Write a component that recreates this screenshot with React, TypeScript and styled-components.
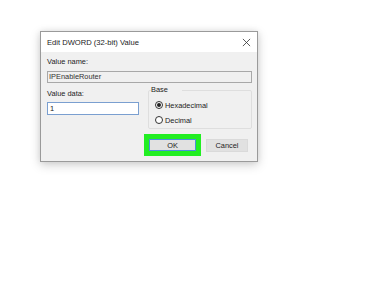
import React from "react";
import styled, { createGlobalStyle } from "styled-components";

const Global = createGlobalStyle`
  html, body { margin: 0; padding: 0; background: #ffffff; }
  body { font-family: "Liberation Sans", Arial, sans-serif; }
`;

const Page = styled.div`
  width: 375px;
  height: 300px;
  padding: 31px 0 0 40px;
  box-sizing: border-box;
`;

const Dialog = styled.div`
  width: 218px;
  height: 131px;
  box-sizing: border-box;
  border: 1px solid #9a9a9a;
  background: #f0f0f0;
  box-shadow: 0 3px 10px rgba(0, 0, 0, 0.18), 0 0 6px rgba(0, 0, 0, 0.08);
  display: flex;
  flex-direction: column;
`;

const TitleBar = styled.div`
  height: 20px;
  background: #ffffff;
  display: flex;
  align-items: center;
  justify-content: space-between;
  padding: 0 6px 0 6px;
  font-size: 7.6px;
  color: #1a1a1a;
`;

const Close = styled.svg`
  width: 9px;
  height: 9px;
`;

const Body = styled.div`
  flex: 1;
  padding: 5px 5px 0 6px;
  display: flex;
  flex-direction: column;
`;

const Label = styled.div`
  font-size: 7.4px;
  color: #222;
  line-height: 10px;
`;

const NameField = styled.div`
  margin-top: 4px;
  height: 12px;
  box-sizing: border-box;
  border: 1px solid #a8a8a8;
  background: #f0f0f0;
  font-size: 7.4px;
  color: #333;
  line-height: 10px;
  padding-left: 1px;
`;

const Row = styled.div`
  margin-top: 6px;
  display: grid;
  grid-template-columns: 92px 1fr;
  column-gap: 9px;
  align-items: start;
`;

const Col = styled.div`
  display: flex;
  flex-direction: column;
`;

const DataInput = styled.div`
  margin-top: 3px;
  width: 92px;
  height: 13px;
  box-sizing: border-box;
  border: 1px solid #7a9fd0;
  background: #ffffff;
  font-size: 7.4px;
  color: #222;
  line-height: 11px;
  padding-left: 2px;
`;

const Group = styled.fieldset`
  margin: -4px 0 0 0;
  height: 44px;
  box-sizing: border-box;
  border: 1px solid #dedede;
  border-radius: 2px;
  padding: 5px 0 0 6px;
  display: flex;
  flex-direction: column;
  gap: 5px;
`;

const Legend = styled.legend`
  font-size: 7.4px;
  color: #222;
  padding: 0 14px 0 0;
  margin-left: -4px;
  line-height: 10px;
`;

const RadioRow = styled.div`
  display: flex;
  align-items: center;
  gap: 2px;
  font-size: 7.4px;
  color: #222;
  height: 10px;
`;

const Radio = styled.span<{ $checked?: boolean }>`
  width: 8px;
  height: 8px;
  box-sizing: border-box;
  border: 1px solid #333;
  border-radius: 50%;
  background: #fff;
  display: inline-flex;
  align-items: center;
  justify-content: center;
  &::after {
    content: "";
    width: 4px;
    height: 4px;
    border-radius: 50%;
    background: ${(p) => (p.$checked ? "#222" : "transparent")};
  }
`;

const Buttons = styled.div`
  margin-top: 5px;
  display: flex;
  justify-content: flex-end;
  align-items: center;
  gap: 5px;
  padding-right: 4px;
`;

const Highlight = styled.div`
  width: 57px;
  height: 22px;
  box-sizing: border-box;
  border: 5px solid #22ee22;
  background: #d8d8d8;
  display: flex;
  align-items: center;
  justify-content: center;
`;

const Button = styled.div<{ $primary?: boolean }>`
  width: ${(p) => (p.$primary ? "100%" : "42px")};
  height: ${(p) => (p.$primary ? "100%" : "13px")};
  box-sizing: border-box;
  background: #e1e1e1;
  border: 1px solid ${(p) => (p.$primary ? "#4a90d9" : "#dadada")};
  font-size: 7.4px;
  color: #222;
  display: flex;
  align-items: center;
  justify-content: center;
`;

export default function App() {
  return (
    <>
      <Global />
      <Page>
        <Dialog>
          <TitleBar>
            <span>Edit DWORD (32-bit) Value</span>
            <Close viewBox="0 0 10 10">
              <path d="M1 1 L9 9 M9 1 L1 9" stroke="#333" strokeWidth="0.9" fill="none" />
            </Close>
          </TitleBar>
          <Body>
            <Label>Value name:</Label>
            <NameField>IPEnableRouter</NameField>
            <Row>
              <Col>
                <Label>Value data:</Label>
                <DataInput>1</DataInput>
              </Col>
              <Group>
                <Legend>Base</Legend>
                <RadioRow>
                  <Radio $checked />
                  Hexadecimal
                </RadioRow>
                <RadioRow>
                  <Radio />
                  Decimal
                </RadioRow>
              </Group>
            </Row>
            <Buttons>
              <Highlight>
                <Button $primary>OK</Button>
              </Highlight>
              <Button>Cancel</Button>
            </Buttons>
          </Body>
        </Dialog>
      </Page>
    </>
  );
}
